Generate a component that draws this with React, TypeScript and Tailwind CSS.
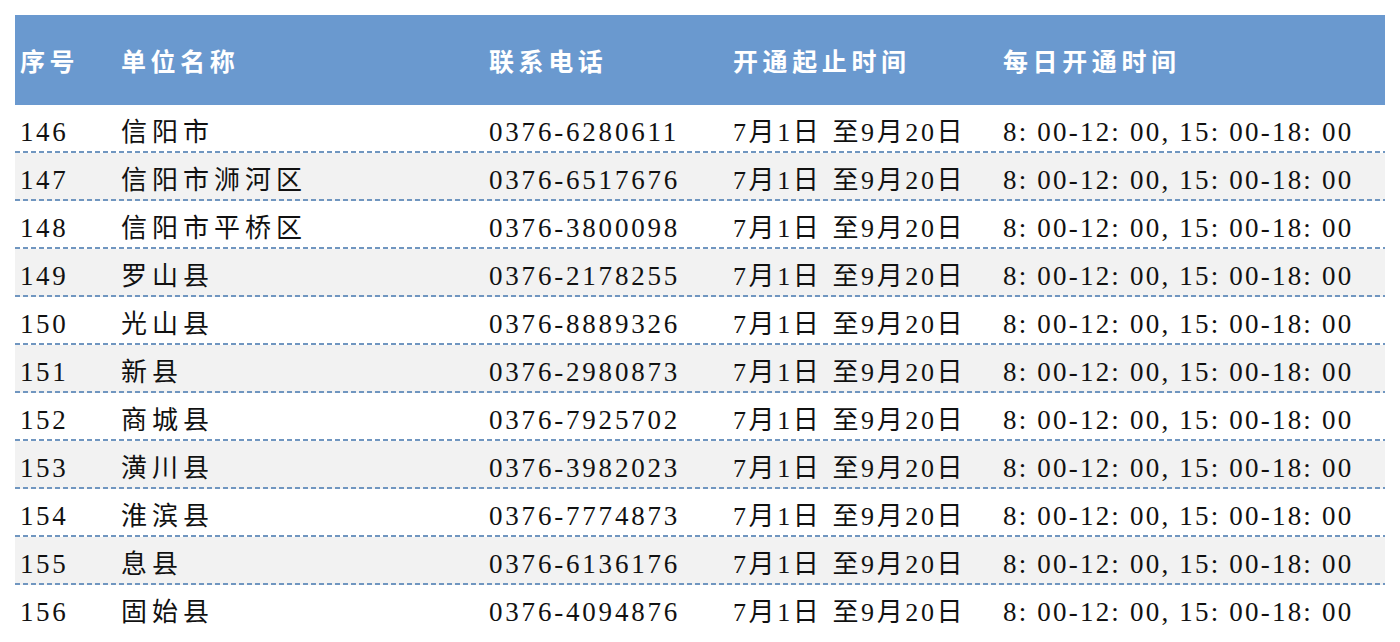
import React from 'react';

const rows: [string, string, string][] = [
  ['146', '信阳市', '0376-6280611'],
  ['147', '信阳市浉河区', '0376-6517676'],
  ['148', '信阳市平桥区', '0376-3800098'],
  ['149', '罗山县', '0376-2178255'],
  ['150', '光山县', '0376-8889326'],
  ['151', '新县', '0376-2980873'],
  ['152', '商城县', '0376-7925702'],
  ['153', '潢川县', '0376-3982023'],
  ['154', '淮滨县', '0376-7774873'],
  ['155', '息县', '0376-6136176'],
  ['156', '固始县', '0376-4094876'],
];

const cols = 'grid grid-cols-[101px_368px_244px_270px_1fr] pl-[5px]';

export default function App() {
  return (
    <div className="min-h-screen bg-white px-[15px] pt-[15px]">
      <div className="w-[1370px]">
        <div
          className={`${cols} h-[90px] items-center bg-[#6a99cf] pt-[1px] text-[25px] font-bold tracking-[4.6px] text-white [font-family:'Noto_Sans_CJK_SC',sans-serif]`}
        >
          <div>序号</div>
          <div>单位名称</div>
          <div>联系电话</div>
          <div>开通起止时间</div>
          <div>每日开通时间</div>
        </div>

        {rows.map(([no, name, phone], i) => (
          <div key={no} className={i % 2 === 1 ? 'bg-[#f2f2f2]' : 'bg-white'}>
            <div
              className={`${cols} h-[46px] items-center pt-[9px] text-[27px] leading-none text-[#111] [font-family:'Liberation_Serif','Noto_Sans_CJK_SC',serif]`}
            >
              <div className="tracking-[2.6px]">{no}</div>
              <div className="text-[26px] tracking-[5px]">{name}</div>
              <div className="tracking-[2.8px]">{phone}</div>
              <div className="text-[26px] tracking-[2.6px] [word-spacing:2px]">7月1日 至9月20日</div>
              <div className="tracking-[2.2px]">8: 00-12: 00, 15: 00-18: 00</div>
            </div>
            {i < rows.length - 1 && (
              <div className="h-[2px] bg-[repeating-linear-gradient(90deg,#7096c0_0_5px,transparent_5px_8px)]" />
            )}
          </div>
        ))}
      </div>
    </div>
  );
}
